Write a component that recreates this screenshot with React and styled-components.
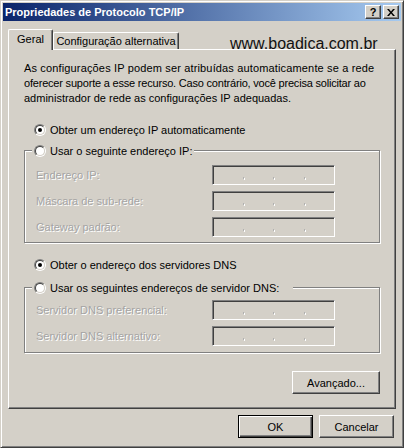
import styled, { createGlobalStyle } from "styled-components";

const GlobalStyle = createGlobalStyle`
  html, body {
    margin: 0;
    padding: 0;
    background: #d4d0c8;
  }
  body {
    font-family: "Liberation Sans", Arial, sans-serif;
    font-size: 11px;
    color: #000;
  }
`;

const Window = styled.div`
  width: 404px;
  height: 448px;
  box-sizing: border-box;
  background: #d4d0c8;
  border: 1px solid;
  border-color: #d4d0c8 #404040 #404040 #d4d0c8;
  box-shadow: inset 1px 1px 0 #fff, inset -1px -1px 0 #808080;
  padding: 2px;
  display: flex;
  flex-direction: column;
`;

const TitleBar = styled.div`
  height: 18px;
  flex: 0 0 18px;
  display: flex;
  align-items: center;
  justify-content: space-between;
  padding: 0 2px 0 2px;
  background: linear-gradient(to right, #0a246a, #a6caf0);
`;

const Title = styled.span`
  color: #fff;
  font-weight: bold;
  font-size: 11px;
  line-height: 18px;
`;

const CaptionButtons = styled.div`
  display: flex;
  gap: 2px;
`;

const CaptionButton = styled.div`
  width: 16px;
  height: 14px;
  box-sizing: border-box;
  background: #d4d0c8;
  border: 1px solid;
  border-color: #fff #404040 #404040 #fff;
  box-shadow: inset -1px -1px 0 #808080;
  display: flex;
  align-items: center;
  justify-content: center;
  font-weight: bold;
  font-size: 11px;
  line-height: 12px;
  color: #000;
`;

const Body = styled.div`
  position: relative;
  flex: 1;
  padding: 8px 5px 0 5px;
  display: flex;
  flex-direction: column;
`;

const Watermark = styled.div`
  position: absolute;
  left: 227px;
  top: 15px;
  font-family: "Liberation Sans", Arial, sans-serif;
  font-size: 16px;
  line-height: 16px;
  color: #111;
  z-index: 3;
`;

const TabStrip = styled.div`
  display: flex;
  align-items: flex-end;
`;

const Tab = styled.div`
  position: relative;
  z-index: ${(p) => (p.$active ? 2 : 1)};
  width: ${(p) => p.$width}px;
  height: ${(p) => (p.$active ? 21 : 17)}px;
  margin-bottom: ${(p) => (p.$active ? -1 : 0)}px;
  box-sizing: border-box;
  border-top: 1px solid #fff;
  border-left: 1px solid #fff;
  border-right: 1px solid #404040;
  border-radius: 2px 2px 0 0;
  box-shadow: inset -1px 0 0 #808080;
  background: #d4d0c8;
  display: flex;
  align-items: center;
  justify-content: center;
  padding-bottom: ${(p) => (p.$active ? 2 : 0)}px;
`;

const Panel = styled.div`
  border: 1px solid;
  border-color: #fff #404040 #404040 #fff;
  box-shadow: inset -1px -1px 0 #808080;
  padding: 11px 15px 14px 15px;
  display: flex;
  flex-direction: column;
`;

const Description = styled.p`
  margin: 0;
  line-height: 15px;
`;

const Line = styled.span`
  display: block;
  white-space: nowrap;
  letter-spacing: ${(p) => p.$spacing || 0}px;
`;

const RadioRow = styled.div`
  display: flex;
  align-items: center;
  gap: 4px;
  height: 16px;
  margin-left: 10px;
  margin-top: ${(p) => p.$top || 0}px;
`;

const RadioOuter = styled.span`
  width: 12px;
  height: 12px;
  box-sizing: border-box;
  border-radius: 50%;
  border: 1px solid;
  border-color: #808080 #fff #fff #808080;
  display: flex;
`;

const RadioInner = styled.span`
  flex: 1;
  border-radius: 50%;
  border: 1px solid;
  border-color: #404040 #d4d0c8 #d4d0c8 #404040;
  background: #fff;
  display: flex;
  align-items: center;
  justify-content: center;
`;

const RadioDot = styled.span`
  width: 4px;
  height: 4px;
  border-radius: 50%;
  background: #000;
`;

const GroupBox = styled.div`
  margin-top: ${(p) => p.$top}px;
  border: 1px solid #808080;
  box-shadow: inset 1px 1px 0 #fff, 1px 1px 0 #fff;
  display: flex;
  flex-direction: column;
`;

const Legend = styled(RadioRow)`
  margin: -8px 0 0 7px;
  padding: 0 ${(p) => p.$padRight}px 0 2px;
  background: #d4d0c8;
  align-self: flex-start;
`;

const Fields = styled.div`
  display: flex;
  flex-direction: column;
  gap: 6px;
  padding: ${(p) => p.$top}px 0 ${(p) => p.$bottom}px 11px;
`;

const FieldRow = styled.div`
  display: flex;
  align-items: center;
`;

const FieldLabel = styled.span`
  width: 176px;
  color: #a4a4a4;
  text-shadow: 1px 1px 0 #fff;
`;

const IPField = styled.div`
  width: 123px;
  height: 20px;
  box-sizing: border-box;
  border: 1px solid;
  border-color: #808080 #fff #fff #808080;
  box-shadow: inset 1px 1px 0 #404040, inset -1px -1px 0 #d4d0c8;
  background: #d4d0c8;
  display: flex;
  align-items: center;
`;

const Segment = styled.span`
  flex: 0 0 30px;
`;

const Dot = styled.span`
  width: 2px;
  height: 2px;
  margin-top: 6px;
  background: #b0b0b0;
  box-shadow: 1px 1px 0 #fff;
`;

const ButtonRow = styled.div`
  display: flex;
  justify-content: flex-end;
  gap: 6px;
  margin-top: ${(p) => p.$top}px;
  padding-right: ${(p) => p.$right || 0}px;
`;

const Button = styled.div`
  width: ${(p) => p.$width || 75}px;
  height: 23px;
  box-sizing: border-box;
  background: #d4d0c8;
  border: 1px solid;
  border-color: ${(p) => (p.$default ? "#000" : "#fff #404040 #404040 #fff")};
  box-shadow: ${(p) =>
    p.$default
      ? "inset 1px 1px 0 #fff, inset -1px -1px 0 #404040, inset -2px -2px 0 #808080"
      : "inset -1px -1px 0 #808080"};
  display: flex;
  align-items: center;
  justify-content: center;
  font-size: 11px;
`;

function Radio({ checked }) {
  return (
    <RadioOuter>
      <RadioInner>{checked && <RadioDot />}</RadioInner>
    </RadioOuter>
  );
}

function IPAddress() {
  return (
    <IPField>
      <Segment />
      <Dot />
      <Segment />
      <Dot />
      <Segment />
      <Dot />
      <Segment />
    </IPField>
  );
}

function Field({ label }) {
  return (
    <FieldRow>
      <FieldLabel>{label}</FieldLabel>
      <IPAddress />
    </FieldRow>
  );
}

export default function App() {
  return (
    <>
      <GlobalStyle />
      <Window>
        <TitleBar>
          <Title>Propriedades de Protocolo TCP/IP</Title>
          <CaptionButtons>
            <CaptionButton>?</CaptionButton>
            <CaptionButton>
              <svg width="8" height="7" viewBox="0 0 8 7">
                <path d="M0 0h2l2 2.5L6 0h2L5 3.5 8 7H6L4 4.5 2 7H0l3-3.5z" fill="#000" />
              </svg>
            </CaptionButton>
          </CaptionButtons>
        </TitleBar>

        <Body>
          <Watermark>www.boadica.com.br</Watermark>
          <TabStrip>
            <Tab $active $width={45}>Geral</Tab>
            <Tab $width={126}>Configuração alternativa</Tab>
          </TabStrip>

          <Panel>
            <Description>
              <Line $spacing={0.15}>As configurações IP podem ser atribuídas automaticamente se a rede</Line>
              <Line $spacing={-0.2}>oferecer suporte a esse recurso. Caso contrário, você precisa solicitar ao</Line>
              <Line>administrador de rede as configurações IP adequadas.</Line>
            </Description>

            <RadioRow $top={16}>
              <Radio checked />
              Obter um endereço IP automaticamente
            </RadioRow>

            <GroupBox $top={12}>
              <Legend $padRight={2}>
                <Radio />
                Usar o seguinte endereço IP:
              </Legend>
              <Fields $top={6} $bottom={5}>
                <Field label="Endereço IP:" />
                <Field label="Máscara de sub-rede:" />
                <Field label="Gateway padrão:" />
              </Fields>
            </GroupBox>

            <RadioRow $top={14}>
              <Radio checked />
              Obter o endereço dos servidores DNS
            </RadioRow>

            <GroupBox $top={14}>
              <Legend $padRight={14}>
                <Radio />
                Usar os seguintes endereços de servidor DNS:
              </Legend>
              <Fields $top={4} $bottom={6}>
                <Field label="Servidor DNS preferencial:" />
                <Field label="Servidor DNS alternativo:" />
              </Fields>
            </GroupBox>

            <ButtonRow $top={18}>
              <Button $width={88}>Avançado...</Button>
            </ButtonRow>
          </Panel>

          <ButtonRow $top={6} $right={2}>
            <Button $default>OK</Button>
            <Button>Cancelar</Button>
          </ButtonRow>
        </Body>
      </Window>
    </>
  );
}
